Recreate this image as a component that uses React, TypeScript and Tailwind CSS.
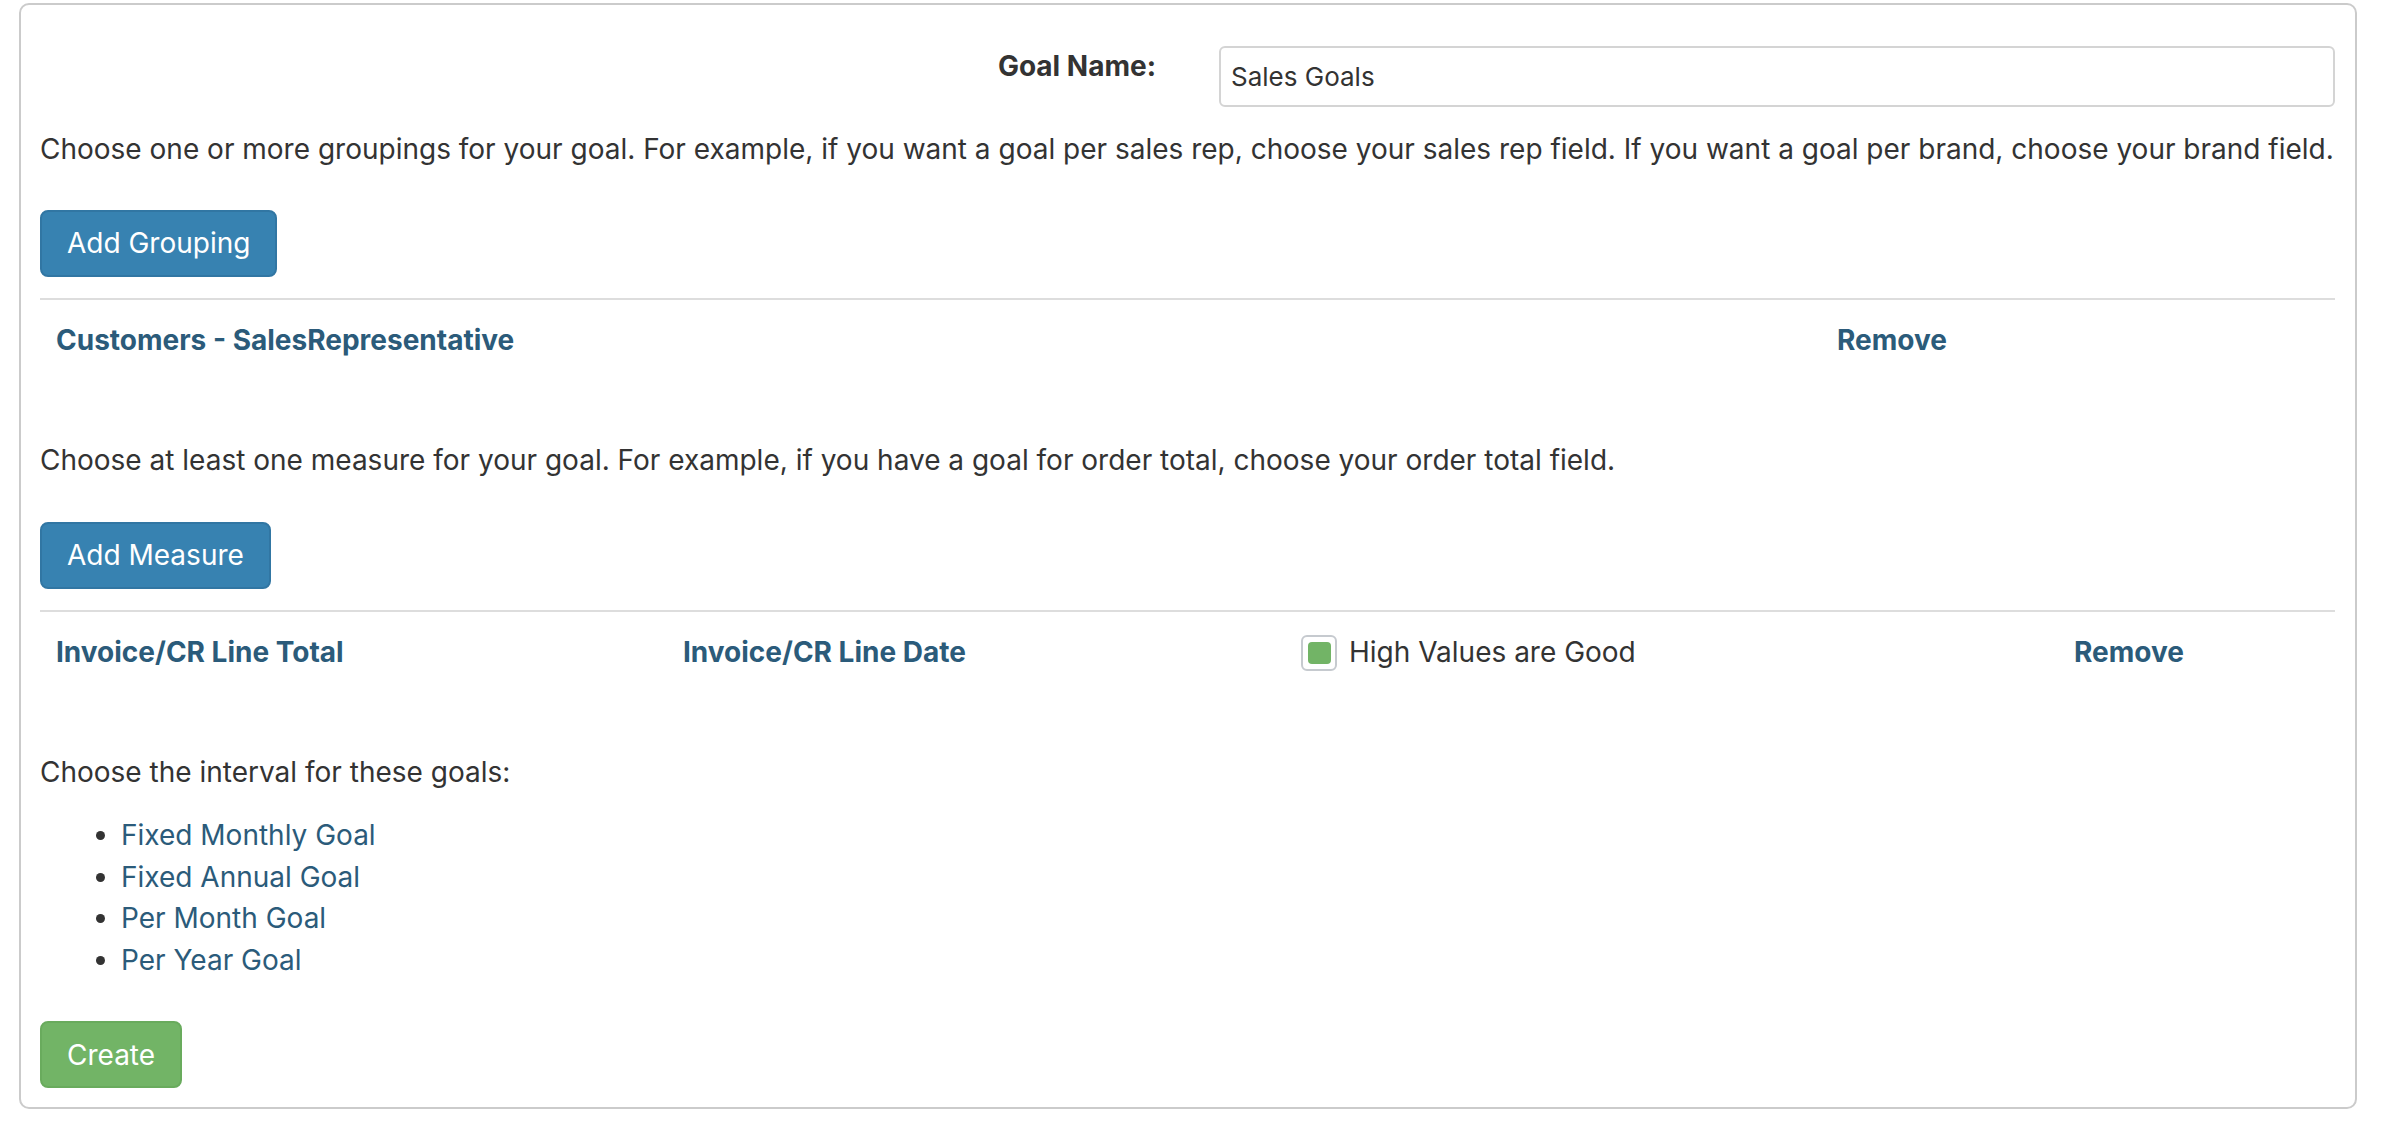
import { useState } from "react";

const INTERVALS = [
  "Fixed Monthly Goal",
  "Fixed Annual Goal",
  "Per Month Goal",
  "Per Year Goal",
];

function Button({ label, color }: { label: string; color: "blue" | "green" }) {
  return (
    <button
      type="button"
      className={[
        "h-[67px] px-[25px] rounded-[8px] border-2 text-white leading-none",
        color === "blue"
          ? "bg-[#3782b1] border-[#3176a3]"
          : "bg-[#72b466] border-[#69ab5d]",
      ].join(" ")}
    >
      {label}
    </button>
  );
}

export default function App() {
  const [name, setName] = useState("Sales Goals");
  const [highGood, setHighGood] = useState(true);

  return (
    <div className="min-h-screen bg-white pt-[3px] pl-[19px] font-['Inter','Noto_Sans',sans-serif] text-[28px] leading-[41.6px] text-[#333]">
      <div className="w-[2338px] border-2 border-[#cbcbcb] rounded-[10px] pl-[19px] pr-[20px] pt-[41px] pb-[19px]">
        <div className="flex items-start">
          <label className="w-[1116px] text-right font-bold">Goal Name:</label>
          <input
            value={name}
            onChange={(e) => setName(e.target.value)}
            className="ml-[63px] flex-1 h-[61px] border-2 border-[#d4d4d4] rounded-[6px] px-[10px] text-[26px] text-[#333] outline-none"
          />
        </div>

        <p className="mt-[22px]">
          Choose one or more groupings for your goal. For example, if you want a goal per sales rep,
          choose your sales rep field. If you want a goal per brand, choose your brand field.
        </p>
        <div className="mt-[39px]">
          <Button label="Add Grouping" color="blue" />
        </div>

        <div className="mt-[21px] border-t-2 border-[#dddddd] pt-[20px] flex font-bold text-[#2b5b7a]">
          <div className="w-[1781px] pl-[16px]">Customers - SalesRepresentative</div>
          <div className="pl-[16px]">Remove</div>
        </div>

        <p className="mt-[79px]">
          Choose at least one measure for your goal. For example, if you have a goal for order total,
          choose your order total field.
        </p>
        <div className="mt-[40px]">
          <Button label="Add Measure" color="blue" />
        </div>

        <div className="mt-[21px] border-t-2 border-[#dddddd] pt-[20px] flex items-center">
          <div className="w-[627px] pl-[16px] font-bold text-[#2b5b7a]">Invoice/CR Line Total</div>
          <div className="w-[618px] pl-[16px] font-bold text-[#2b5b7a]">Invoice/CR Line Date</div>
          <div className="w-[773px] pl-[16px] flex items-center">
            <button
              type="button"
              onClick={() => setHighGood(!highGood)}
              className="w-[36px] h-[36px] rounded-[6px] border-2 border-[#c6cacf] bg-white flex items-center justify-center"
            >
              {highGood && <span className="block w-[23px] h-[22px] rounded-[4px] bg-[#72b466]" />}
            </button>
            <span className="ml-[12px]">High Values are Good</span>
          </div>
          <div className="pl-[16px] font-bold text-[#2b5b7a]">Remove</div>
        </div>

        <p className="mt-[79px]">Choose the interval for these goals:</p>
        <ul className="mt-[21px] list-disc pl-[81px]">
          {INTERVALS.map((item) => (
            <li key={item}>
              <a href="#" className="text-[#2b5b7a]">
                {item}
              </a>
            </li>
          ))}
        </ul>

        <div className="mt-[40px]">
          <Button label="Create" color="green" />
        </div>
      </div>
    </div>
  );
}
